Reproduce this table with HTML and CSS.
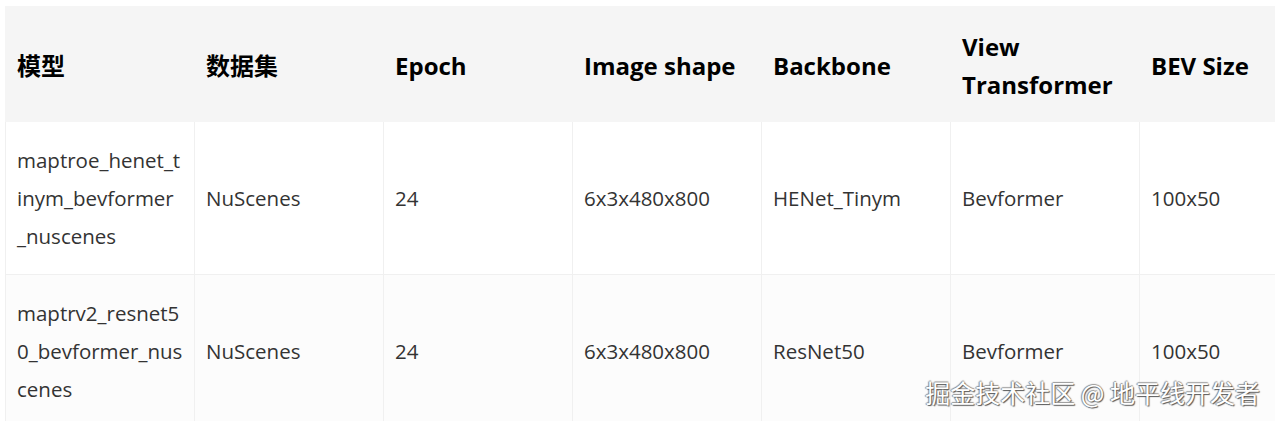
FILE: index.html
```html
<!DOCTYPE html>
<html lang="zh">
<head>
<meta charset="utf-8">
<link rel="stylesheet" href="styles.css">
</head>
<body>
<div class="page">
  <table class="spec">
    <colgroup>
      <col class="c"><col class="c"><col class="c"><col class="c"><col class="c"><col class="c"><col class="c">
    </colgroup>
    <thead>
      <tr>
        <th>模型</th>
        <th>数据集</th>
        <th>Epoch</th>
        <th>Image shape</th>
        <th>Backbone</th>
        <th>View Transformer</th>
        <th>BEV Size</th>
      </tr>
    </thead>
    <tbody>
      <tr>
        <td class="name">maptroe_henet_t<wbr>inym_bevformer<wbr>_nuscenes</td>
        <td>NuScenes</td>
        <td>24</td>
        <td>6x3x480x800</td>
        <td>HENet_Tinym</td>
        <td>Bevformer</td>
        <td>100x50</td>
      </tr>
      <tr class="alt">
        <td class="name">maptrv2_resnet5<wbr>0_bevformer_nus<wbr>cenes</td>
        <td>NuScenes</td>
        <td>24</td>
        <td>6x3x480x800</td>
        <td>ResNet50</td>
        <td>Bevformer</td>
        <td>100x50</td>
      </tr>
    </tbody>
  </table>
  <div class="watermark">掘金技术社区 @ 地平线开发者</div>
</div>
</body>
</html>
```
FILE: styles.css
```css
html, body {
  margin: 0;
  padding: 0;
  background: #ffffff;
}
body {
  width: 1275px;
  height: 421px;
  overflow: hidden;
}
.page {
  position: relative;
  width: 1275px;
  height: 421px;
  overflow: hidden;
  padding: 6px 0 0 5px;
  box-sizing: border-box;
  font-family: "Open Sans", "Noto Sans CJK SC", sans-serif;
}
.spec {
  border-collapse: collapse;
  table-layout: fixed;
  width: 1323px;
  font-size: 20.5px;
  line-height: 38px;
  color: #333333;
}
.spec .c {
  width: 189px;
}
.spec th,
.spec td {
  padding: 19px 13px 19px 11px;
  text-align: left;
  vertical-align: middle;
  border: 1px solid #f0f0f0;
}
.spec td.name {
  word-break: normal;
  overflow-wrap: normal;
  white-space: normal;
}
.spec th {
  padding-top: 21px;
  padding-bottom: 17px;
  background: #f5f5f5;
  color: #000000;
  font-weight: 700;
  font-size: 24px;
  border-color: #f5f5f5;
}
.spec tbody tr {
  background: #ffffff;
}
.spec tbody tr.alt {
  background: #fcfcfc;
}
.watermark {
  position: absolute;
  right: 15px;
  top: 375px;
  font-family: "Noto Sans CJK SC", sans-serif;
  font-size: 25px;
  line-height: 34px;
  color: #ffffff;
  text-shadow: 1px 1px 1px #555, -1px 0 1px #888, 0 -1px 1px #999;
}
```
